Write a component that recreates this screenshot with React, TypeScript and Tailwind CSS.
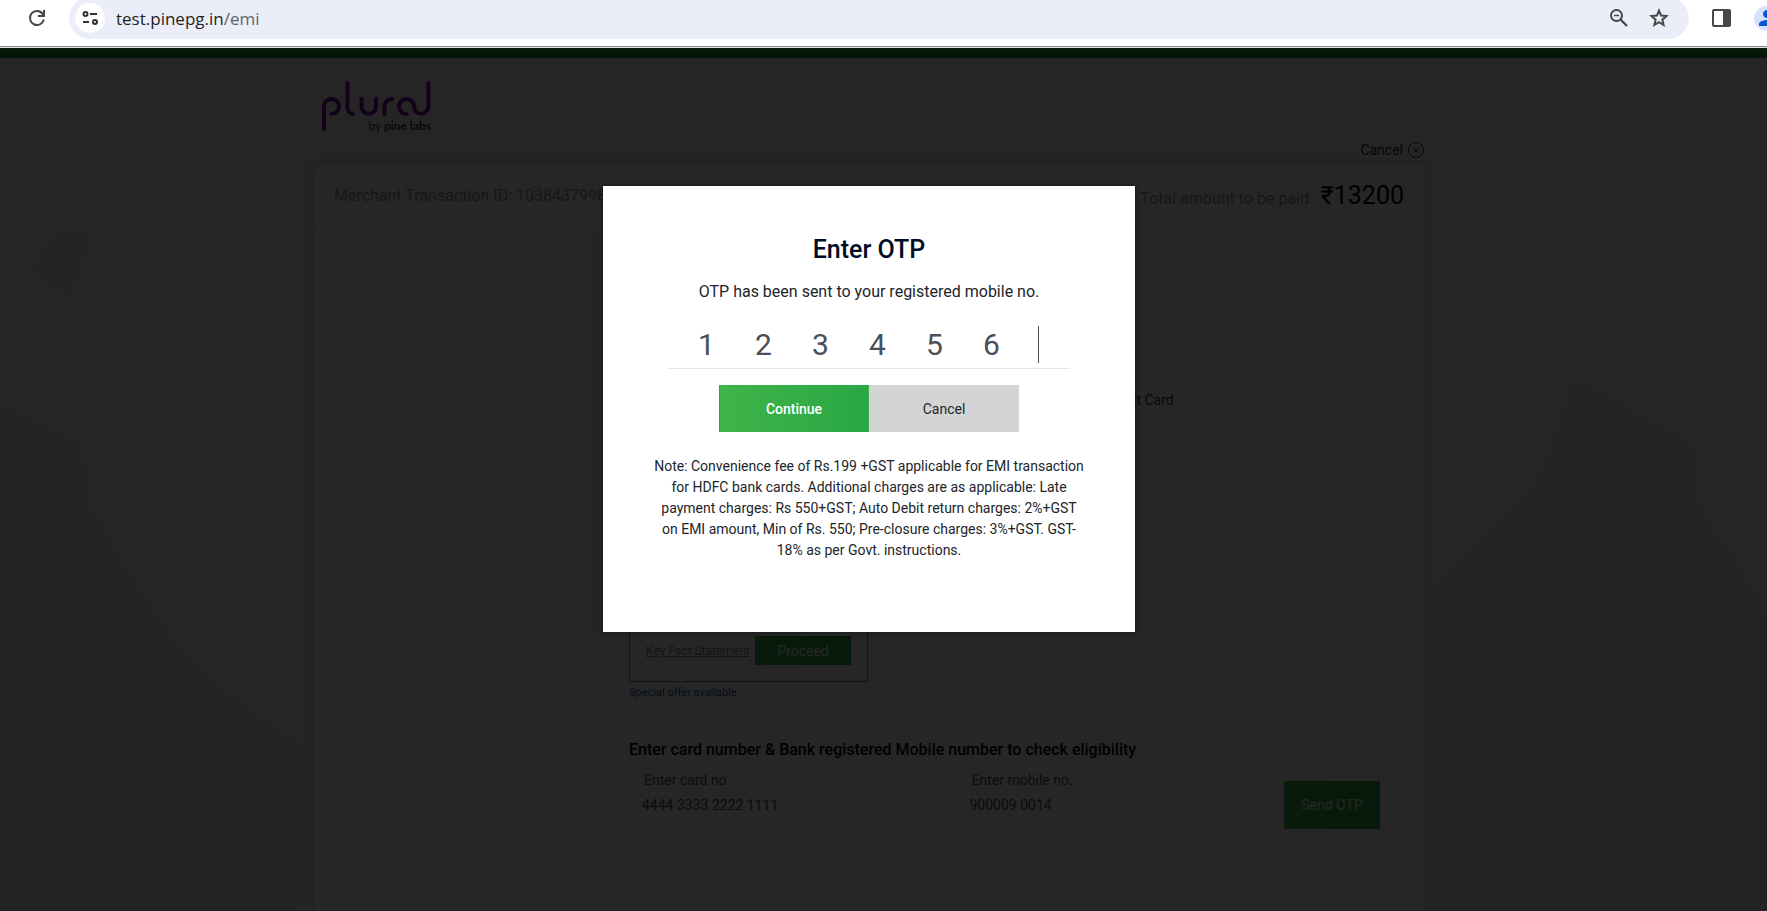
import { useState } from 'react'
import { MdPerson } from 'react-icons/md'

type FieldProps = {
  id: string
  label: string
  value: string
  onChange: (v: string) => void
}

const greenBtn = 'bg-linear-to-r from-[#3fb549] to-[#28a745] text-white'

function BrowserBar() {
  return (
    <header className="h-12 bg-white border-b border-[#dfe8e0] overflow-hidden">
      <div className="h-[47px] border-b border-[#858585]">
        <div className="flex items-center h-9 pl-[25px] text-[#474747]">
          <button aria-label="Reload" className="shrink-0">
            <svg width="24" height="24" viewBox="0 0 24 24" fill="none" stroke="currentColor" strokeWidth="2">
              <path d="M18.800 13.500A7 7 0 1 1 17.600 7.800L19 9.400" />
              <path d="M19 4v6h-6" />
            </svg>
          </button>
          <div className="flex flex-1 items-center h-[42px] ml-5 pl-[6px] pr-[18px] rounded-full bg-[#ebeef8]">
            <button aria-label="Site information" className="grid place-items-center size-[30px] rounded-full bg-white text-[#333]">
              <svg width="18" height="18" viewBox="0 0 18 18" fill="none" stroke="currentColor" strokeWidth="2">
                <circle cx="4.500" cy="5" r="2" />
                <path d="M9 5h7M2 13h6" />
                <circle cx="14" cy="13" r="2" />
              </svg>
            </button>
            <p className="flex-1 ml-[11px] pt-px font-['Open_Sans',sans-serif] text-[17px] text-[#1f1f1f]">
              test.pinepg.in<span className="text-[#5f6368]">/emi</span>
            </p>
            <div className="flex gap-4">
              <button aria-label="Zoom">
                <svg width="24" height="24" viewBox="0 0 24 24" fill="none" stroke="currentColor" strokeWidth="2">
                  <circle cx="9.500" cy="9.500" r="5.500" />
                  <path d="M13.500 13.500l6.500 6.500" strokeWidth="2.300" />
                  <path d="M7 9.500h5" strokeWidth="1.500" />
                </svg>
              </button>
              <button aria-label="Bookmark">
                <svg width="24" height="24" viewBox="0 0 24 24" fill="none" stroke="currentColor" strokeWidth="2">
                  <path d="M12 4.600l2.100 5 5.400.500-4.100 3.600 1.200 5.300L12 16.200l-4.600 2.800 1.200-5.300-4.100-3.600 5.400-.500z" />
                </svg>
              </button>
            </div>
          </div>
          <button aria-label="Side panel" className="shrink-0 ml-5">
            <svg width="24" height="24" viewBox="0 0 24 24">
              <rect x="4" y="4" width="17" height="16" rx="1" fill="none" stroke="currentColor" strokeWidth="2" />
              <path d="M14 4h7v16h-7z" fill="currentColor" />
            </svg>
          </button>
          <button aria-label="Profile" className="shrink-0 grid place-items-center size-[25px] ml-[21px] -mr-3 rounded-full bg-[#d3e3fd] text-[#0b57d0]">
            <MdPerson size={24} />
          </button>
        </div>
      </div>
    </header>
  )
}

function Logo() {
  return (
    <svg width="110" height="52" viewBox="0 0 110 52" role="img" aria-label="plural by pine labs">
      <g fill="none" stroke="#7a0aa0" strokeWidth="4" strokeLinecap="round">
        <path d="M2 48V25.500a7.500 7.500 0 1 1 7.500 7.500" />
        <path d="M25.500 2v24.500a6 6 0 0 0 5 6.300" />
        <path d="M39.500 18v7.500a7.300 7.300 0 0 0 14.600 0V18" />
        <path d="M62.500 33v-7.500a7.500 7.500 0 0 1 7.500-7.500" />
        <path d="M84.500 33a7.500 7.500 0 1 1 7.500-7.500a7.200 7.200 0 0 0 14.400 0V2" />
      </g>
      <text x="109" y="49" textAnchor="end" fill="#1a4a40" fontFamily="Lato, sans-serif" fontSize="12">
        by <tspan fontWeight="700">pine labs</tspan>
      </text>
    </svg>
  )
}

// faint world map behind the card
function MapBackdrop() {
  return (
    <svg className="absolute inset-0 w-full h-full" viewBox="0 0 1767 863" preserveAspectRatio="xMidYMin slice" fill="#eeeeee" aria-hidden="true">
      <path d="M60 182L33 220L70 247L88 182z" />
      <path d="M0 356L78 397L90 462L125 522L170 590L220 642L300 700V863H0z" />
      <path d="M1424 546L1515 464L1545 422L1576 332L1690 397L1698 462L1733 512L1755 549L1767 572V863H1424z" />
    </svg>
  )
}

function Field({ id, label, value, onChange }: FieldProps) {
  return (
    <div className="relative flex flex-1 items-center h-12 border border-[#e6e6e6]">
      <label htmlFor={id} className="absolute -top-3 left-[6px] px-2 bg-white text-sm text-[#555]">
        {label}
      </label>
      <input
        id={id}
        value={value}
        onChange={e => onChange(e.target.value)}
        className="w-full px-3 text-sm text-[#555] outline-none"
      />
    </div>
  )
}

function OtpModal() {
  const [otp, setOtp] = useState(['1', '2', '3', '4', '5', '6'])

  function setDigit(i: number, v: string) {
    setOtp(otp.map((d, n) => (n === i ? v.slice(-1) : d)))
  }

  return (
    <div role="dialog" aria-labelledby="otp-title" className="w-[532px] px-[50px] pt-[49px] pb-[71px] bg-white text-center text-[#212529] shadow-[0_0_4px_rgba(0,0,0,0.5)]">
      <h2 id="otp-title" className="text-[25px] leading-[30px] font-medium text-[#000c26]">Enter OTP</h2>
      <p className="mt-[15px] text-base">OTP has been sent to your registered mobile no.</p>

      <div className="flex items-center h-12 mt-[17px] mx-[15px] pl-[10px] border-b border-[#e6e6e6]">
        {otp.map((d, i) => (
          <input
            key={i}
            aria-label={`OTP digit ${i + 1}`}
            inputMode="numeric"
            value={d}
            onChange={e => setDigit(i, e.target.value)}
            className="w-[57px] text-center text-[30px] leading-[36px] text-[#495057] outline-none"
          />
        ))}
        <span className="w-px h-[37px] ml-[18px] bg-[#495057]" />
      </div>

      <div className="flex justify-center mt-4">
        <button className={`w-[150px] h-[47px] text-sm font-medium border-x border-l-[#28a745] border-r-[#3fb549] ${greenBtn}`}>Continue</button>
        <button className="w-[150px] h-[47px] text-sm bg-[#d4d4d4]">Cancel</button>
      </div>

      <p className="mt-6 text-sm leading-[21px]">
        Note: Convenience fee of Rs.199 +GST applicable for EMI transaction for HDFC bank cards.
        Additional charges are as applicable: Late payment charges: Rs 550+GST; Auto Debit return
        charges: 2%+GST on EMI amount, Min of Rs. 550; Pre-closure charges: 3%+GST. GST-18% as per
        Govt. instructions.
      </p>
    </div>
  )
}

export default function App() {
  const [card, setCard] = useState('4444 3333 2222 1111')
  const [mobile, setMobile] = useState('900009 0014')
  const [cardType, setCardType] = useState('credit')

  return (
    <div className="flex flex-col h-screen overflow-hidden font-[Roboto,sans-serif]">
      <BrowserBar />

      <main className="relative flex flex-col flex-1 bg-[#f4f4f4] overflow-hidden">
        <MapBackdrop />
        <div className="relative shrink-0 h-[10px] bg-linear-to-b from-[#3fb549] from-50% to-[#148c32] to-50%" />

        <div className="relative flex flex-col flex-1 pr-[29px]">
          <div className="flex flex-col flex-1 w-full max-w-[1110px] mx-auto">
            <div className="flex justify-between h-[106px] pl-2 pt-[23px] pb-1">
              <Logo />
              <button className="flex items-center gap-[5px] self-end text-sm text-[#333]">
                Cancel
                <svg width="16" height="16" viewBox="0 0 16 16" fill="none" stroke="currentColor">
                  <circle cx="8" cy="8" r="7.500" />
                  <path d="M5 5l6 6M11 5l-6 6" />
                </svg>
              </button>
            </div>

            <div className="flex flex-col flex-1 bg-white shadow-[0_0_8px_rgba(0,0,0,0.15)]">
              <div className="flex items-center justify-between h-[66px] px-5 pb-[2px] border-b border-[#eee] text-base text-[#999]">
                <p>Merchant Transaction ID: 1038437998</p>
                <p>Total amount to be paid : <span className="text-[25px] leading-8 text-black">₹13200</span></p>
              </div>

              <div className="flex flex-1">
                <aside className="w-[277px] shrink-0" />
                <div className="w-3 shrink-0 bg-[#f6f6f6]" />

                <section className="flex-1 pl-3 pr-6">
                  <div className="h-[123px] border-b border-[#eee]" />

                  <div className="px-[14px] pt-[23px] pb-[37px] border-b border-[#ddd]">
                    <div className="grid grid-cols-2 h-12 border border-[#eee] text-sm text-[#444]">
                      <label className="flex items-center gap-2 pl-2">
                        <input type="radio" name="card-type" checked={cardType === 'credit'} onChange={() => setCardType('credit')} />
                        Credit Card
                      </label>
                      <label className="flex items-center gap-2 pl-20">
                        <input type="radio" name="card-type" checked={cardType === 'debit'} onChange={() => setCardType('debit')} />
                        Debit Card
                      </label>
                    </div>

                    <div className="flex flex-col justify-end w-[239px] h-[235px] mt-[23px] px-4 pb-4 border border-[#28a745]">
                      <div className="flex items-center justify-between">
                        <a href="#" className="text-xs text-[#888] underline">Key Fact Statement</a>
                        <button className={`w-24 h-[29px] text-sm ${greenBtn}`}>Proceed</button>
                      </div>
                    </div>
                    <p className="mt-[3px] text-[11px] leading-4 text-[#1a5fa8]">Special offer available</p>

                    <h3 className="mt-[37px] text-base font-medium text-black">
                      Enter card number &amp; Bank registered Mobile number to check eligibility
                    </h3>
                    <div className="flex gap-6 mt-[19px] pr-[6px]">
                      <Field id="card" label="Enter card no." value={card} onChange={setCard} />
                      <Field id="mobile" label="Enter mobile no." value={mobile} onChange={setMobile} />
                      <button className={`w-24 h-12 text-sm ${greenBtn}`}>Send OTP</button>
                    </div>
                  </div>
                </section>
              </div>
            </div>
          </div>
        </div>

        <div className="absolute inset-0 flex items-start justify-center pt-[138px] pr-[29px] bg-black/85">
          <OtpModal />
        </div>
      </main>
    </div>
  )
}
